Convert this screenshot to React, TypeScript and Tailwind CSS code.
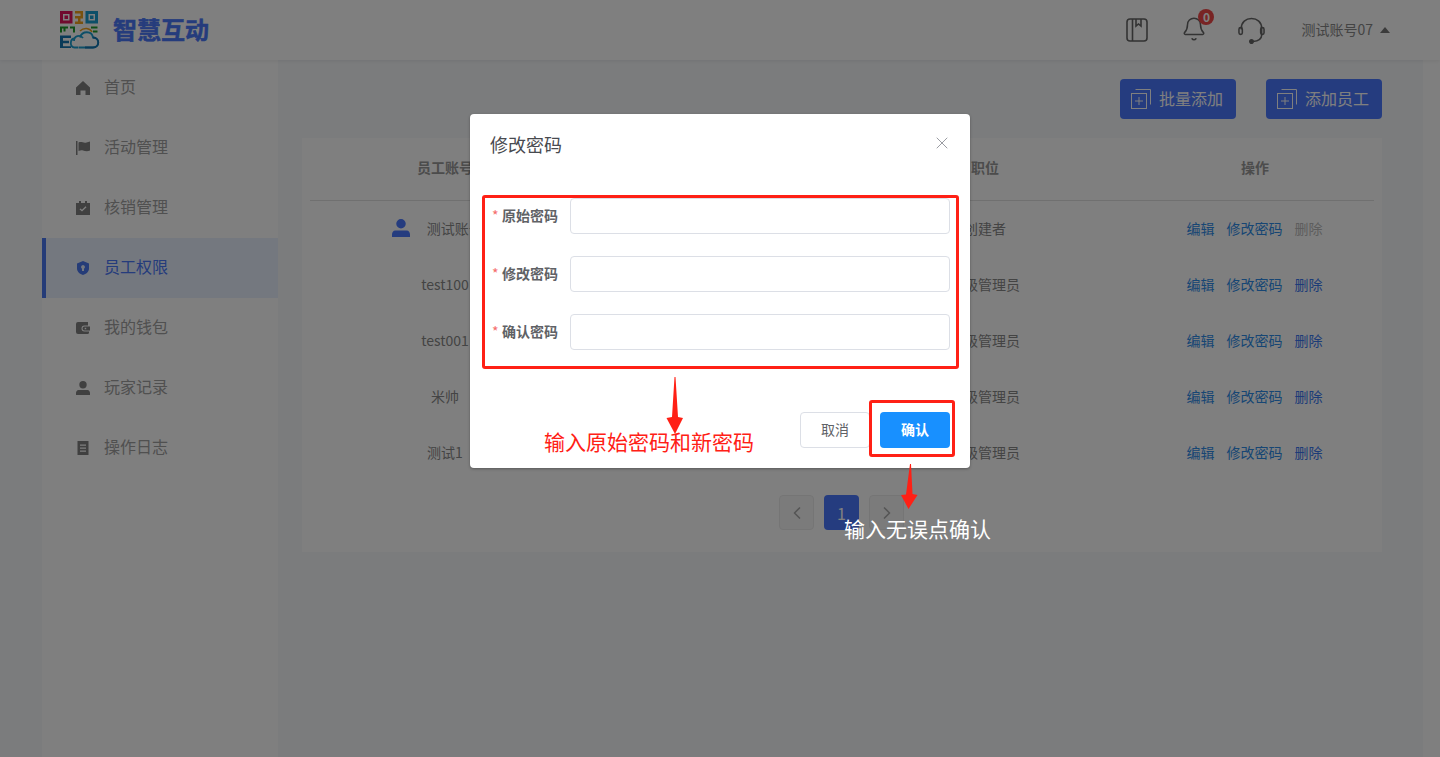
import React from "react";
import { Bell, ChevronLeft, ChevronRight, X } from "lucide-react";

const F = '"Noto Sans CJK SC", "Liberation Sans", sans-serif';

function Logo() {
  return (
    <svg width="40" height="38" viewBox="0 0 40 38" className="shrink-0">
      <path fillRule="evenodd" d="M0 0h12.500v12.500H0zM3 3v6.500h6.500V3z" fill="#e0145c" />
      <rect x="4.500" y="4.500" width="3.500" height="3.500" fill="#e0145c" />
      <path d="M15 0h8v7.500h-2.500v3h2.500V13h-8v-2.500h3v-3h-3V5h5.500V2.500H15z" fill="#f0a21c" />
      <path fillRule="evenodd" d="M25.500 0h12.500v12.500H25.500zM28.500 3v6.500H35V3z" fill="#1b9fd0" />
      <rect x="30" y="4.500" width="3.500" height="3.500" fill="#1b9fd0" />
      <path d="M0 15.500h8v2H5.500v3h-2v-3H2v4H0zM10 15.500h5v6h-2v-4h-3zM31 15.500h6.500v2H31zM33 19.500h4.500v2H33z" fill="#1f9a2c" />
      <path d="M0 24.500h11v2.500H3v2.800h6v2.400H3v3H11V37H0z" fill="#1474b0" />
      <path d="M14 30c0-5 6-7 9-3" fill="none" stroke="#1b9fd0" strokeWidth="1.800" />
      <path d="M20 20c4-4 10-3 12 1" fill="none" stroke="#f0a21c" strokeWidth="1.600" />
      <path d="M18.500 36.500h-4c-5 0-5-9 .5-9 M19 36.500h14c7 0 7-10 0-10-1-7-11-7-13 0" fill="none" stroke="#1b9fd0" strokeWidth="1.800" />
      <path d="M25 36.500h8c7 0 7-10 0-10" fill="none" stroke="#1474b0" strokeWidth="1.800" />
    </svg>
  );
}

function BookIcon() {
  return (
    <svg width="22" height="24" viewBox="0 0 22 24" fill="none" stroke="#666666" strokeWidth="1.600">
      <rect x="1" y="1" width="20" height="22" rx="3" />
      <path d="M6.500 1v22" />
      <path d="M10 1v7l2.500-2 2.500 2V1" />
    </svg>
  );
}

function HeadsetIcon() {
  return (
    <svg width="27" height="27" viewBox="0 0 28 28" fill="none" stroke="#666666" strokeWidth="1.600">
      <path d="M3.500 13V11.500C3.500 5.500 8 1.500 14 1.500s10.500 4 10.500 10V19c0 3.500-3.500 6-9 6.500" />
      <rect x="1" y="11" width="3.500" height="7" rx="1.700" />
      <rect x="23.500" y="11" width="3.500" height="7" rx="1.700" />
      <circle cx="14" cy="25.500" r="1.800" fill="#666666" />
    </svg>
  );
}

function AddIcon() {
  return (
    <svg width="20" height="20" viewBox="0 0 20 20" fill="none" stroke="#ffffff" strokeWidth="1">
      <rect x="0.500" y="4.500" width="15" height="15" />
      <path d="M4.500 0.500h15v15M8 8v8M4 12h8" />
    </svg>
  );
}

const navIcons: Record<string, React.ReactNode> = {
  home: <path d="M7 0 0 6.500V14h4.500V9.500h5V14H14V6.500z" />,
  flag: <path d="M0 0h1.500v14H0zM2.500 1.500C5.500 0 7.500 2.500 10.500 1.500L14 .5v9c-3 1.500-5 .5-7 0-1.500-.4-3 0-4.500.5z" />,
  check: (
    <path
      fillRule="evenodd"
      d="M3 0h2v2h4V0h2v2h3v12H0V2h3zM3.500 8.300 6 10.500l4.500-4.300-.9-.9L6 8.700 4.400 7.400z"
    />
  ),
  shield: (
    <path
      fillRule="evenodd"
      d="M7 0l6 2.500v5C13 11 10 13 7 14c-3-1-6-3-6-6.500v-5zM7 4a2 2 0 0 0-1 3.700V10h2V7.700A2 2 0 0 0 7 4z"
    />
  ),
  wallet: (
    <path
      fillRule="evenodd"
      d="M2 1h10v3.500H8.500a3 3 0 0 0 0 6H13V12a1.500 1.500 0 0 1-1.500 1H2a2 2 0 0 1-2-2V3a2 2 0 0 1 2-2zM8.500 5.500H14v4H8.500a2 2 0 0 1 0-4zM8.700 6.800v1.500h1.500V6.800z"
    />
  ),
  user: <path d="M7 0a3.700 3.700 0 1 1 0 7.400A3.700 3.700 0 0 1 7 0zM2.500 9h9C13 9 14 10.500 14 12v2H0v-2c0-1.500 1-3 2.500-3z" />,
  file: (
    <path
      fillRule="evenodd"
      d="M1.500 0h11v14h-11zM4 3.500v1.300h6V3.500zM4 6.500v1.300h6V6.500zM4 9.500v1.300h6V9.500z"
    />
  ),
};

const nav = [
  { t: "首页", i: "home" },
  { t: "活动管理", i: "flag" },
  { t: "核销管理", i: "check" },
  { t: "员工权限", i: "shield", active: true },
  { t: "我的钱包", i: "wallet" },
  { t: "玩家记录", i: "user" },
  { t: "操作日志", i: "file" },
];

const rows = [
  { name: "测试账号07", role: "创建者", owner: true },
  { name: "test100", role: "超级管理员" },
  { name: "test001", role: "超级管理员" },
  { name: "米帅", role: "超级管理员" },
  { name: "测试1", role: "超级管理员" },
];

function Field({ label }: { label: string }) {
  return (
    <div className="flex items-center h-9">
      <div className="w-[100px] pl-[22px] pb-[2px] flex items-center text-sm font-bold text-[#606266]">
        <span className="w-[10px] text-[#f56c6c] font-normal">*</span>
        <span>{label}</span>
      </div>
      <div className="w-[380px] h-9 rounded border border-[#dcdfe6] bg-white" />
    </div>
  );
}

export default function App() {
  return (
    <div className="relative h-[757px] w-[1440px] overflow-hidden bg-[#f6f8fb]" style={{ fontFamily: F }}>
      <header className="relative z-10 h-[60px] bg-white shadow-[0_1px_4px_rgba(0,0,0,0.08)] flex items-center pl-[60px] pr-[50px]">
        <Logo />
        <span className="ml-[13px] pb-[2px] text-2xl font-bold text-[#4a78f8] [-webkit-text-stroke:0.5px_#4a78f8]">智慧互动</span>
        <div className="ml-auto flex items-center">
          <BookIcon />
          <div className="relative ml-[33px] w-[26px] h-[28px]">
            <Bell size={26} strokeWidth={1.4} color="#666666" />
            <span className="absolute -top-[7px] left-[17px] w-4 h-4 rounded-full bg-[#f04848] text-white text-xs leading-4 text-center font-bold">
              0
            </span>
          </div>
          <div className="ml-[31px]">
            <HeadsetIcon />
          </div>
          <span className="ml-[36px] pb-[2px] text-sm text-[#888]">测试账号07</span>
          <span className="ml-[7px] w-0 h-0 border-x-[5px] border-x-transparent border-b-[6px] border-b-[#777]" />
        </div>
      </header>

      <div className="-mt-[2px] flex h-[699px]">
        <div className="w-[42px] shrink-0" />
        <aside className="w-[236px] shrink-0 bg-white">
          {nav.map((n) => (
            <div
              key={n.t}
              className={
                n.active
                  ? "h-[60px] flex items-center pl-[30px] border-l-4 border-[#4a78f0] bg-[#e8f0ff] text-[#4a78f8]"
                  : "h-[60px] flex items-center pl-[34px] text-[#a0a0a0]"
              }
            >
              <svg width="14" height="14" viewBox="0 0 14 14" fill={n.active ? "#4a78f0" : "#808080"} className="shrink-0">
                {navIcons[n.i]}
              </svg>
              <span className="ml-[14px] pb-1 text-base">{n.t}</span>
            </div>
          ))}
        </aside>

        <main className="w-[1145px] shrink-0 pl-6 pr-[41px]">
          <div className="pt-[21px] flex justify-end gap-[30px]">
            {["批量添加", "添加员工"].map((b) => (
              <button
                key={b}
                className="w-[116px] h-10 rounded bg-[#4a78ff] text-white text-base flex items-center pl-[11px] gap-[8px]"
              >
                <AddIcon />
                <span className="pb-[2px]">{b}</span>
              </button>
            ))}
          </div>
          <section className="mt-[19px] h-[414px] bg-white px-2">
            <div className="grid grid-cols-[270px_270px_270px_254px] h-[63px] pb-1 items-center border-b border-[#e0e0e0] text-sm font-bold text-[#999]">
              <div className="text-center">员工账号</div>
              <div />
              <div className="text-center">职位</div>
              <div className="text-center pl-4">操作</div>
            </div>
            {rows.map((r) => (
              <div key={r.name} className="grid grid-cols-[270px_270px_270px_254px] h-14 pb-[2px] items-center text-sm text-[#888]">
                <div className="flex items-center justify-center gap-[17px]">
                  {r.owner && (
                    <svg width="18" height="18" viewBox="0 0 14 14" fill="#4a78ff">
                      {navIcons.user}
                    </svg>
                  )}
                  <span>{r.name}</span>
                </div>
                <div />
                <div className="text-center">{r.role}</div>
                <div className="flex justify-center gap-3 pl-[15px] text-[#2e8ce8]">
                  <span>编辑</span>
                  <span>修改密码</span>
                  <span className={r.owner ? "text-[#bbb]" : "text-[#3a78f0]"}>删除</span>
                </div>
              </div>
            ))}
            <div className="mt-[14px] flex justify-end pr-[470px] gap-[10px]">
              <div className="w-[35px] h-[35px] rounded-sm border border-[#eaeaea] bg-[#f7f7f7] flex items-center justify-center">
                <ChevronLeft size={20} color="#aaa" />
              </div>
              <div className="w-[35px] h-[35px] rounded-sm bg-[#4a78ff] text-white text-base flex items-center justify-center">
                1
              </div>
              <div className="w-[35px] h-[35px] rounded-sm border border-[#eaeaea] bg-[#f7f7f7] flex items-center justify-center">
                <ChevronRight size={20} color="#aaa" />
              </div>
            </div>
          </section>
        </main>
        <div className="flex-1 bg-white" />
      </div>

      {/* dialog mask */}
      <div className="absolute inset-0 z-20 bg-black/50" />

      {/* dialog */}
      <div className="absolute z-30 left-[470px] top-[114px] w-[500px] h-[354px] bg-white rounded shadow-[0_1px_3px_rgba(0,0,0,0.3)] flex flex-col">
        <div className="relative pt-[18px] pl-5 text-lg leading-6 text-[#484a4f]">
          修改密码
          <X size={20} strokeWidth={1.1} color="#909399" className="absolute right-[18px] top-[19px]" />
        </div>
        <div className="mt-[42px] flex flex-col gap-[22px]">
          <Field label="原始密码" />
          <Field label="修改密码" />
          <Field label="确认密码" />
        </div>
        <div className="mt-auto pb-5 pr-5 flex justify-end gap-[10px]">
          <button className="w-[70px] h-9 pb-[2px] rounded border border-[#dcdfe6] text-sm text-[#606266] bg-white">取消</button>
          <button className="w-[70px] h-9 pb-[2px] rounded bg-[#1890ff] text-sm font-bold text-white">确认</button>
        </div>
      </div>

      {/* tutorial annotations */}
      <div className="absolute z-40 left-[482px] top-[195px] w-[477px] h-[174px] border-[3px] border-[#ff2015] rounded-[3px]" />
      <div className="absolute z-40 left-[869px] top-[400px] w-[86px] h-[57px] border-[3px] border-[#ff2015] rounded-[3px]" />
      <svg className="absolute z-40 left-[666px] top-[377px]" width="18" height="57" viewBox="0 0 18 57" fill="#ff2015">
        <path d="M8.500 0h1L12 40l5 1-8 16-8.500-16 5.500-1z" />
      </svg>
      <svg className="absolute z-40 left-[900px] top-[464px]" width="18" height="45" viewBox="0 0 18 45" fill="#ff2015">
        <path d="M10 0h1L12.500 30l5 1-9 14L1 31l5-.5z" />
      </svg>
      <span className="absolute z-40 left-[544px] top-[426px] text-[21px] leading-[30px] text-[#ff2015]">输入原始密码和新密码</span>
      <span className="absolute z-40 left-[844px] top-[513px] text-[21px] leading-[30px] text-white">输入无误点确认</span>
    </div>
  );
}
